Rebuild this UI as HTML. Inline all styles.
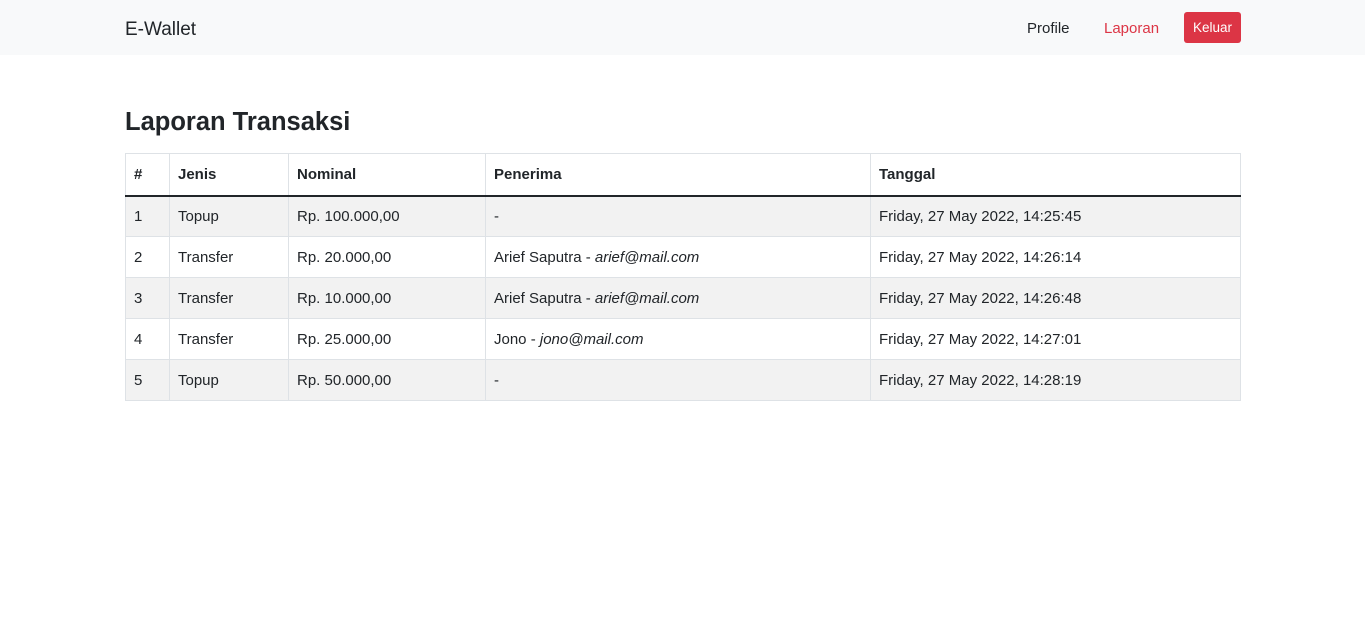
<!DOCTYPE html>
<html><head><meta charset="utf-8"><style>
*{box-sizing:border-box;margin:0;padding:0}
body{font-family:"Liberation Sans",sans-serif;color:#212529;background:#fff;width:1365px;height:632px;overflow:hidden;font-size:15px}
.nav{height:55px;background:#f8f9fa;position:relative}
.brand{position:absolute;left:125px;top:19px;font-size:19px;color:#212529}
.l1{position:absolute;left:1027px;top:20px;color:#212529}
.l2{position:absolute;left:1104px;top:20px;color:#dc3545}
.btn{position:absolute;left:1184px;top:12px;width:57px;height:31px;background:#dc3545;color:#fff;border-radius:3px;font-size:13.5px;text-align:center;line-height:31px}
h3{position:absolute;left:125px;top:108px;font-size:25.5px;font-weight:bold;color:#212529}
table{position:absolute;left:125px;top:153px;width:1116px;border-collapse:collapse}
td,th{border:1px solid #dee2e6;padding:1px 8px 0;height:41px;text-align:left;vertical-align:middle}
th{font-weight:bold;border-bottom:2px solid #212529;height:42px}
tbody tr:nth-child(odd){background:#f2f2f2}
i{font-style:italic}
</style></head><body>
<div class="nav"><span class="brand">E-Wallet</span><span class="l1">Profile</span><span class="l2">Laporan</span><span class="btn">Keluar</span></div>
<h3>Laporan Transaksi</h3>
<table>
<colgroup><col style="width:44px"><col style="width:119px"><col style="width:197px"><col style="width:385px"><col></colgroup>
<thead><tr><th>#</th><th>Jenis</th><th>Nominal</th><th>Penerima</th><th>Tanggal</th></tr></thead>
<tbody>
<tr><td>1</td><td>Topup</td><td>Rp. 100.000,00</td><td>-</td><td>Friday, 27 May 2022, 14:25:45</td></tr>
<tr><td>2</td><td>Transfer</td><td>Rp. 20.000,00</td><td>Arief Saputra - <i>arief@mail.com</i></td><td>Friday, 27 May 2022, 14:26:14</td></tr>
<tr><td>3</td><td>Transfer</td><td>Rp. 10.000,00</td><td>Arief Saputra - <i>arief@mail.com</i></td><td>Friday, 27 May 2022, 14:26:48</td></tr>
<tr><td>4</td><td>Transfer</td><td>Rp. 25.000,00</td><td>Jono - <i>jono@mail.com</i></td><td>Friday, 27 May 2022, 14:27:01</td></tr>
<tr><td>5</td><td>Topup</td><td>Rp. 50.000,00</td><td>-</td><td>Friday, 27 May 2022, 14:28:19</td></tr>
</tbody></table>
</body></html>
